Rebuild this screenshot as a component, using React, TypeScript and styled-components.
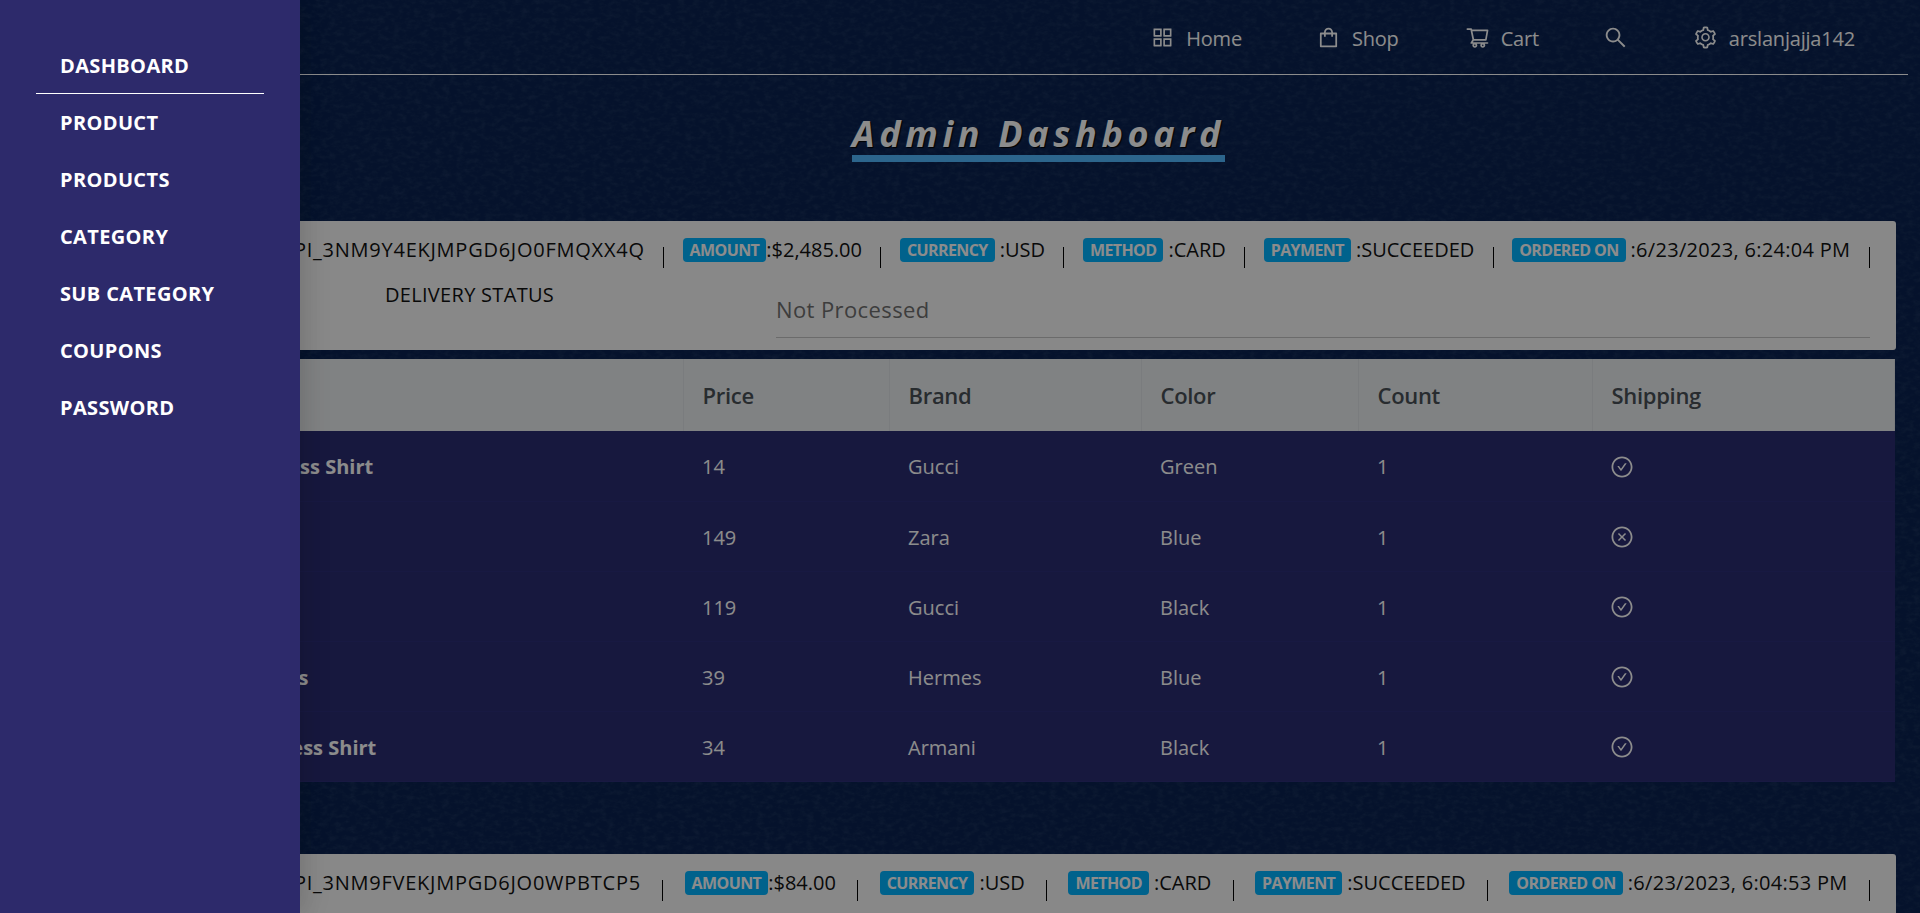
import React from "react";
import styled, { createGlobalStyle } from "styled-components";
import {
  AiOutlineAppstore,
  AiOutlineShopping,
  AiOutlineShoppingCart,
  AiOutlineSearch,
  AiOutlineSetting,
  AiOutlineCheckCircle,
  AiOutlineCloseCircle,
} from "react-icons/ai";

const Global = createGlobalStyle`
  html, body { margin: 0; padding: 0; height: 100%; overflow: hidden; background: #0b2454; }
  body { font-family: "Open Sans", "Noto Sans", "Liberation Sans", sans-serif; }
  * { box-sizing: border-box; }
`;

const Page = styled.div`
  position: relative;
  width: 1920px;
  height: 913px;
  overflow: hidden;
  background: #0a2250;
`;

const Texture = styled.svg`
  position: absolute;
  inset: 0;
  width: 100%;
  height: 100%;
  opacity: 0.09;
`;

const Content = styled.div`
  position: relative;
  padding: 0 12px 0 0;
`;

const Nav = styled.nav`
  display: flex;
  justify-content: flex-end;
  align-items: center;
  height: 75px;
  padding: 2px 53px 0 0;
  border-bottom: 1px solid #fff;
  color: #fff;
  font-size: 20px;
  letter-spacing: -0.2px;
`;

const NavItem = styled.div<{ $gap?: number }>`
  display: flex;
  align-items: center;
  gap: 11px;
  margin-left: ${(p) => p.$gap ?? 0}px;
  svg { font-size: 25px; flex: none; margin-top: -2px; }
`;

const Main = styled.main`
  padding: 0 12px 0 36px;
`;

const Title = styled.h1`
  width: fit-content;
  margin: 38px 0 0 816px;
  color: #fff;
  font-size: 36px;
  font-weight: 700;
  font-style: italic;
  line-height: 42px;
  letter-spacing: 4.65px;
  border-bottom: 7px solid #50b8ff;
  text-shadow: 1px 1px 1px #000;
`;

const Order = styled.section<{ $top: number }>`
  margin-top: ${(p) => p.$top}px;
`;

const Card = styled.div`
  height: 129px;
  margin-bottom: 9px;
  padding: 17px 26px 0 0;
  background: #f8f8f8;
  border-radius: 3px;
  color: #111;
`;

const InfoRow = styled.div`
  display: flex;
  justify-content: space-between;
  align-items: flex-start;
  height: 36px;
  padding-left: 141px;
  font-size: 20px;
  line-height: 24px;
`;

const Field = styled.span`
  display: inline-flex;
  align-items: center;
  white-space: nowrap;
`;

const Code = styled.span`
  letter-spacing: 0.75px;
`;

const Stamp = styled.span`
  letter-spacing: 0.3px;
`;

const Badge = styled.span<{ $tight?: boolean }>`
  display: inline-block;
  height: 24px;
  line-height: 24px;
  padding: 0 7px;
  margin-right: ${(p) => (p.$tight ? 0 : 5)}px;
  border-radius: 4px;
  background: #00b2ff;
  color: #fff;
  font-size: 16px;
  font-weight: 700;
  letter-spacing: -0.6px;
`;

const Sep = styled.span`
  align-self: flex-start;
  width: 1px;
  height: 21px;
  margin-top: 9px;
  background: #000;
`;

const StatusRow = styled.div`
  display: flex;
  align-items: flex-start;
  padding-left: 349px;
`;

const StatusLabel = styled.div`
  width: 392px;
  margin-top: 9px;
  font-size: 20px;
  letter-spacing: 0.3px;
  line-height: 24px;
`;

const StatusSelect = styled.div`
  width: 1097px;
  height: 64px;
  padding-top: 20px;
  border-bottom: 1px solid #c4c4c4;
  color: #707070;
  font-size: 22px;
  letter-spacing: 0.4px;
  line-height: 30px;
`;

const Table = styled.table`
  width: calc(100% - 1px);
  table-layout: fixed;
  border-collapse: collapse;
`;

const Head = styled.th<{ $w?: number; $inset?: number }>`
  width: ${(p) => (p.$w ? `${p.$w}px` : "auto")};
  height: 72px;
  padding: 0 19px 0 ${(p) => p.$inset ?? 19}px;
  background: #e9edef;
  border-right: 1px solid #dfe2e5;
  color: #495057;
  font-size: 22px;
  font-weight: 600;
  letter-spacing: -0.3px;
  text-align: left;
`;

const Row = styled.tr`
  height: 70px;
  background: #2a2c72;
  border-bottom: 1px solid #2d2f78;
`;

const Cell = styled.td<{ $inset?: number; $strong?: boolean }>`
  padding: 2px 19px 0 ${(p) => p.$inset ?? 19}px;
  color: #fff;
  font-size: 20px;
  font-weight: ${(p) => (p.$strong ? 700 : 400)};
  white-space: nowrap;
  svg { display: block; font-size: 24px; margin-left: -1px; }
`;

const Mask = styled.div`
  position: absolute;
  inset: 0;
  background: rgba(0, 0, 0, 0.45);
`;

const Drawer = styled.aside`
  position: absolute;
  top: 0;
  left: 0;
  bottom: 0;
  width: 300px;
  padding: 37px 36px 0;
  background: #2d2a6b;
  box-shadow: 6px 0 16px rgba(0, 0, 0, 0.08), 9px 0 28px rgba(0, 0, 0, 0.05);
`;

const DrawerItem = styled.div<{ $rule?: boolean }>`
  height: 57px;
  padding-left: 24px;
  line-height: 57px;
  color: #fff;
  font-size: 20px;
  font-weight: 700;
  letter-spacing: 0.35px;
  white-space: nowrap;
  border-bottom: ${(p) => (p.$rule ? "1px solid #fff" : "none")};
`;

type Item = { title: string; price: number; brand: string; color: string; shipping: boolean };

const items: Item[] = [
  { title: "Classic Dress Shirt", price: 14, brand: "Gucci", color: "Green", shipping: true },
  { title: "Jeans", price: 149, brand: "Zara", color: "Blue", shipping: false },
  { title: "Blazer", price: 119, brand: "Gucci", color: "Black", shipping: true },
  { title: "Silk Scarves", price: 39, brand: "Hermes", color: "Blue", shipping: true },
  { title: "Formal Dress Shirt", price: 34, brand: "Armani", color: "Black", shipping: true },
];

const menu = ["DASHBOARD", "PRODUCT", "PRODUCTS", "CATEGORY", "SUB CATEGORY", "COUPONS", "PASSWORD"];

const TITLE_INSET = 156;

function Info({ id, amount, date }: { id: string; amount: string; date: string }) {
  return (
    <InfoRow>
      <Field><Badge>PAYMENT ID</Badge>:<Code>{id}</Code></Field>
      <Sep />
      <Field><Badge $tight>AMOUNT</Badge>:{amount}</Field>
      <Sep />
      <Field><Badge>CURRENCY</Badge>:USD</Field>
      <Sep />
      <Field><Badge>METHOD</Badge>:CARD</Field>
      <Sep />
      <Field><Badge>PAYMENT</Badge>:SUCCEEDED</Field>
      <Sep />
      <Field><Badge>ORDERED ON</Badge><Stamp>:{date}</Stamp></Field>
      <Sep />
    </InfoRow>
  );
}

export default function App() {
  return (
    <Page>
      <Global />
      <Texture aria-hidden="true">
        <filter id="denim">
          <feTurbulence type="fractalNoise" baseFrequency="0.14 0.22" numOctaves="4" seed="11" />
          <feColorMatrix values="0 0 0 0 0.35  0 0 0 0 0.45  0 0 0 0 0.6  0 0 0 -2.2 1.3" />
        </filter>
        <rect width="100%" height="100%" filter="url(#denim)" />
      </Texture>
      <Content>
        <Nav>
          <NavItem><AiOutlineAppstore />Home</NavItem>
          <NavItem $gap={74}><AiOutlineShopping />Shop</NavItem>
          <NavItem $gap={66}><AiOutlineShoppingCart />Cart</NavItem>
          <NavItem $gap={64}><AiOutlineSearch /></NavItem>
          <NavItem $gap={65}><AiOutlineSetting />arslanjajja142</NavItem>
        </Nav>
        <Main>
          <Title>Admin Dashboard</Title>
          <Order $top={59}>
            <Card>
              <Info id="PI_3NM9Y4EKJMPGD6JO0FMQXX4Q" amount="$2,485.00" date="6/23/2023, 6:24:04 PM" />
              <StatusRow>
                <StatusLabel>DELIVERY STATUS</StatusLabel>
                <StatusSelect>Not Processed</StatusSelect>
              </StatusRow>
            </Card>
            <Table>
              <thead>
                <tr>
                  <Head $w={647} $inset={TITLE_INSET}>Title</Head>
                  <Head $w={206}>Price</Head>
                  <Head $w={252}>Brand</Head>
                  <Head $w={217}>Color</Head>
                  <Head $w={234}>Count</Head>
                  <Head>Shipping</Head>
                </tr>
              </thead>
              <tbody>
                {items.map((it) => (
                  <Row key={it.title}>
                    <Cell $strong $inset={TITLE_INSET}>{it.title}</Cell>
                    <Cell>{it.price}</Cell>
                    <Cell>{it.brand}</Cell>
                    <Cell>{it.color}</Cell>
                    <Cell>1</Cell>
                    <Cell>{it.shipping ? <AiOutlineCheckCircle /> : <AiOutlineCloseCircle />}</Cell>
                  </Row>
                ))}
              </tbody>
            </Table>
          </Order>
          <Order $top={72}>
            <Card>
              <Info id="PI_3NM9FVEKJMPGD6JO0WPBTCP5" amount="$84.00" date="6/23/2023, 6:04:53 PM" />
            </Card>
          </Order>
        </Main>
      </Content>
      <Mask />
      <Drawer>
        {menu.map((m, i) => (
          <DrawerItem key={m} $rule={i === 0}>{m}</DrawerItem>
        ))}
      </Drawer>
    </Page>
  );
}
